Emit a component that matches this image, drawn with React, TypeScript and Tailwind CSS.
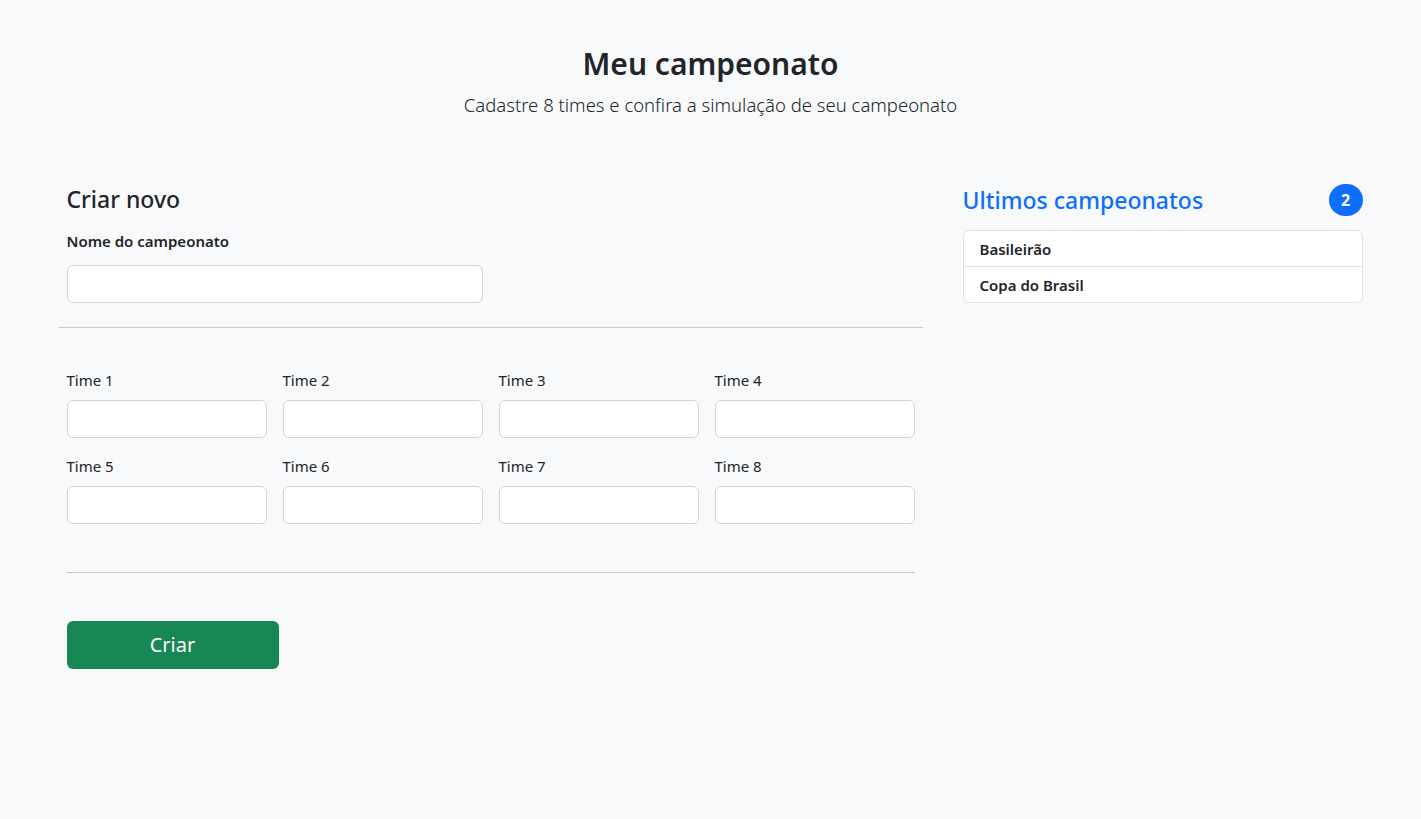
import React from 'react';

const teams = ['Time 1', 'Time 2', 'Time 3', 'Time 4', 'Time 5', 'Time 6', 'Time 7', 'Time 8'];
const recent = ['Basileirão', 'Copa do Brasil'];

export default function App() {
  return (
    <div className="min-h-screen w-full bg-[#f8f9fa] text-[#212529] font-['Noto_Sans',sans-serif]">
      {/* Header */}
      <header className="pt-[46px] text-center">
        <h1 className="mb-[8px] text-[30px] font-semibold leading-[36px]">Meu campeonato</h1>
        <p className="text-[18.5px] font-light leading-[30px]">
          Cadastre 8 times e confira a simulação de seu campeonato
        </p>
      </header>

      <main className="mx-auto mt-[65px] flex w-[1304px] gap-10">
        {/* Form */}
        <section className="w-[864px]">
          <div className="px-2">
            <h2 className="text-[23px] font-medium leading-[29px]">Criar novo</h2>
            <label className="mt-[15px] block text-[15px] font-semibold leading-6">Nome do campeonato</label>
            <input
              type="text"
              className="mt-3 block h-[38px] w-[416px] rounded-[6px] border border-[#ced4da] bg-white px-3 outline-none"
            />
          </div>

          <hr className="mt-6 border-0 border-t border-[#c7c8c9]" />

          <div className="mt-10 grid grid-cols-4 gap-x-4 gap-y-4 px-2">
            {teams.map((t) => (
              <div key={t}>
                <label className="mb-2 block text-[15px] leading-6">{t}</label>
                <input
                  type="text"
                  className="block h-[38px] w-full rounded-[6px] border border-[#ced4da] bg-white px-3 outline-none"
                />
              </div>
            ))}
          </div>

          <div className="px-2">
            <hr className="mt-12 border-0 border-t border-[#c7c8c9]" />
            <button className="mt-12 h-12 w-[212px] rounded-[6px] bg-[#198754] text-[20px] leading-none text-white">
              Criar
            </button>
          </div>
        </section>

        {/* Latest */}
        <aside className="w-[400px]">
          <div className="flex h-[30px] items-center justify-between">
            <h2 className="text-[23px] font-medium leading-[29px] text-[#0d6efd]">Ultimos campeonatos</h2>
            <span className="flex h-8 w-[34px] items-center justify-center rounded-full bg-[#0d6efd] text-[16px] font-bold text-white">
              2
            </span>
          </div>
          <ul className="mt-[15px] overflow-hidden rounded-[6px] border border-[#dee2e6] bg-white">
            {recent.map((r, i) => (
              <li
                key={r}
                className={`px-4 py-[5.5px] text-[15px] font-semibold leading-6 ${i > 0 ? 'border-t border-[#dee2e6]' : ''}`}
              >
                {r}
              </li>
            ))}
          </ul>
        </aside>
      </main>
    </div>
  );
}
